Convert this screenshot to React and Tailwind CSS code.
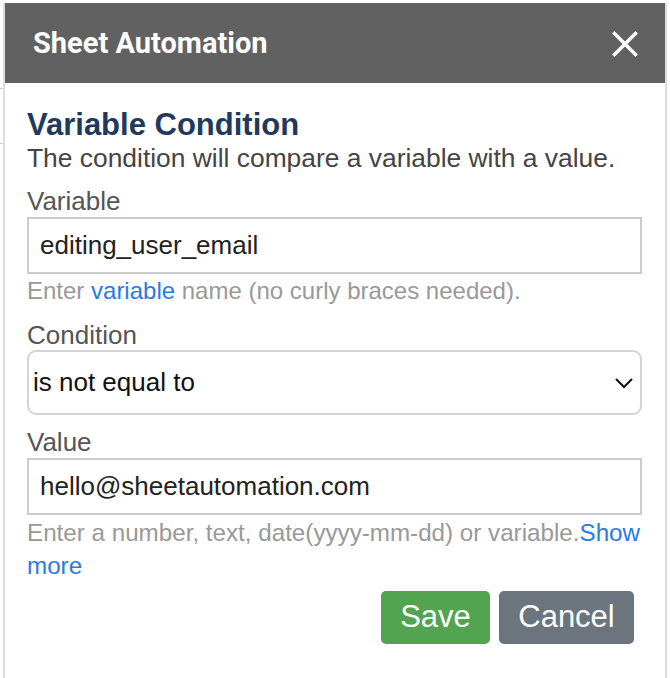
import { useState } from 'react'

function App() {
  const [variable, setVariable] = useState('editing_user_email')
  const [condition, setCondition] = useState('not_equal')
  const [value, setValue] = useState('hello@sheetautomation.com')

  return (
    <div className="w-[670px] h-[678px] bg-white relative overflow-hidden" style={{ fontFamily: '"Liberation Sans", Arial, sans-serif' }}>
      {/* background sheet grid lines peeking out on the left */}
      <div className="absolute left-0 top-[88px] w-[3px] h-px bg-[#d0d0d0]"></div>
      <div className="absolute left-0 top-[143px] w-[3px] h-px bg-[#d0d0d0]"></div>

      <div className="ml-[3px] mt-[3px] w-[664px] h-[675px] border-l-2 border-r-2 border-[#dcdce0] flex flex-col">
        {/* Header */}
        <div className="h-[80px] bg-[#616161] flex items-center justify-between pl-[28px] pr-[27px]">
          <h2 className="mt-[2px] text-white text-[29px] font-bold" style={{ fontFamily: 'Roboto, "Liberation Sans", sans-serif' }}>
            Sheet Automation
          </h2>
          <button className="mt-[1px] text-white">
            <svg width="26" height="26" viewBox="0 0 26 26" fill="none" stroke="currentColor" strokeWidth="3.4" strokeLinecap="square">
              <path d="M2.5 2.5L23.5 23.5M23.5 2.5L2.5 23.5" />
            </svg>
          </button>
        </div>

        {/* Body */}
        <div className="pl-[22px] pt-[24px]">
          <h3 className="text-[31px] leading-[35px] font-bold text-[#213a5c]">Variable Condition</h3>
          <p className="text-[26.4px] leading-[32px] text-[#444]">The condition will compare a variable with a value.</p>

          <label className="block mt-[12px] text-[26px] leading-[30px] text-[#555]">Variable</label>
          <input
            value={variable}
            onChange={(e) => setVariable(e.target.value)}
            className="block mt-[1px] w-[615px] h-[57px] border-2 border-[#cccccc] px-[11px] text-[26px] text-[#222] outline-none"
          />
          <p className="mt-[3px] text-[24px] leading-[28px] text-[#999]">
            Enter <span className="text-[#2a7ae2]">variable</span> name (no curly braces needed).
          </p>

          <label className="block mt-[15px] text-[26px] leading-[30px] text-[#555]">Condition</label>
          <div className="relative w-[615px]">
            <select
              value={condition}
              onChange={(e) => setCondition(e.target.value)}
              className="block appearance-none w-full h-[65px] border-2 border-[#d4d4d4] rounded-[9px] px-[4px] text-[26px] text-[#111] bg-white outline-none"
            >
              <option value="equal">is equal to</option>
              <option value="not_equal">is not equal to</option>
              <option value="contains">contains</option>
            </select>
            <svg className="absolute right-[9px] top-[28px] pointer-events-none" width="18" height="10" viewBox="0 0 18 10" fill="none" stroke="#111" strokeWidth="2">
              <path d="M1 1L9 9L17 1" />
            </svg>
          </div>

          <label className="block mt-[12px] text-[26px] leading-[30px] text-[#555]">Value</label>
          <input
            value={value}
            onChange={(e) => setValue(e.target.value)}
            className="block mt-[1px] w-[615px] h-[57px] border-2 border-[#cccccc] px-[11px] text-[26px] text-[#222] outline-none"
          />
          <p className="mt-[1px] text-[24.2px] leading-[33px] text-[#999] w-[616px]">
            Enter a number, text, date(yyyy-mm-dd) or variable.<span className="text-[#2a7ae2]">Show </span><span className="text-[#2a7ae2]">more</span>
          </p>

          <div className="flex justify-end gap-[9px] mt-[9px] w-[615px] pr-[8px]">
            <button className="w-[109px] h-[53px] bg-[#53a451] text-white text-[31px] rounded-[5px]">Save</button>
            <button className="w-[135px] h-[53px] bg-[#6c757d] text-white text-[31px] rounded-[5px]">Cancel</button>
          </div>
        </div>
      </div>
    </div>
  )
}

export default App
